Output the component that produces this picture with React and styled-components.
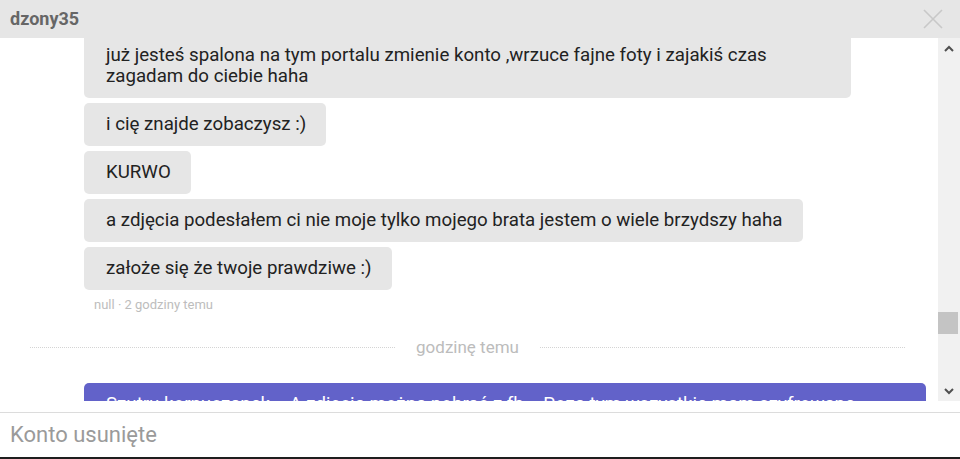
import React from "react";
import styled, { createGlobalStyle } from "styled-components";

const Global = createGlobalStyle`
  html, body { margin: 0; padding: 0; background: #fff; }
  body { font-family: Roboto, "Noto Sans", Arial, sans-serif; }
  * { box-sizing: border-box; }
`;

const Window = styled.div`
  width: 960px;
  height: 459px;
  display: flex;
  flex-direction: column;
  background: #fff;
  border-bottom: 2px solid #1e1e1e;
  overflow: hidden;
`;

const Header = styled.div`
  height: 38px;
  flex: 0 0 38px;
  background: #e6e6e6;
  display: flex;
  align-items: center;
  justify-content: space-between;
  padding: 0 17px 1px 10px;
  position: relative;
  z-index: 1;
`;

const Name = styled.span`
  font-weight: 700;
  font-size: 18px;
  color: #666;
`;

const Close = styled.button`
  border: 0;
  background: none;
  padding: 0;
  width: 20px;
  height: 20px;
  display: flex;
  cursor: pointer;
`;

const Body = styled.div`
  height: 363px;
  flex: 0 0 363px;
  display: flex;
`;

const Scroller = styled.div`
  flex: 1;
  overflow: hidden;
`;

const Messages = styled.div`
  margin-top: -4px;
  padding: 0 12px 0 84px;
  display: flex;
  flex-direction: column;
  align-items: flex-start;
`;

const Bubble = styled.div`
  background: ${(p) => (p.$own ? "#6262c9" : "#e6e6e6")};
  color: ${(p) => (p.$own ? "#fff" : "#222")};
  border-radius: 5px;
  padding: 11px 20px 11px 22px;
  font-size: 18.7px;
  line-height: 21px;
  max-width: ${(p) => (p.$own ? "100%" : "767px")};
  width: ${(p) => (p.$own ? "100%" : "auto")};
  margin-bottom: 5px;
`;

const Meta = styled.div`
  font-size: 13px;
  color: #bdbdbd;
  margin: 3px 0 0 10px;
  line-height: 14px;
`;

const Divider = styled.div`
  display: flex;
  align-items: center;
  gap: 21px;
  margin: 25px 21px 26px -54px;
  font-size: 17px;
  line-height: 20px;
  color: #bcbcbc;
  align-self: stretch;
  &::before, &::after {
    content: "";
    flex: 1;
    border-top: 1px dotted #d4d4d4;
  }
`;

const Scrollbar = styled.div`
  width: 22px;
  flex: 0 0 22px;
  background: #f1f1f1;
  display: flex;
  flex-direction: column;
`;

const Arrow = styled.div`
  height: 20px;
  display: flex;
  align-items: center;
  justify-content: center;
`;

const Track = styled.div`
  flex: 1;
`;

const Thumb = styled.div`
  margin-top: 254px;
  height: 22px;
  width: 20px;
  background: #c4c4c4;
`;

const Composer = styled.div`
  margin-top: 11px;
  flex: 1;
  border-top: 1px solid #dcdcdc;
  display: flex;
  align-items: center;
  padding: 0 10px 2px;
`;

const Input = styled.input`
  border: 0;
  outline: none;
  width: 100%;
  font-family: Roboto, "Noto Sans", Arial, sans-serif;
  font-size: 22px;
  color: #999;
  background: transparent;
  padding: 0;
  &::placeholder { color: #9a9a9a; }
`;

const Chevron = ({ up }) => (
  <svg width="10" height="7" viewBox="0 0 10 7">
    <path
      d={up ? "M1 6 L5 2 L9 6" : "M1 1 L5 5 L9 1"}
      fill="none"
      stroke="#505050"
      strokeWidth="2"
    />
  </svg>
);

const messages = [
  "już jesteś spalona na tym portalu zmienie konto ,wrzuce fajne foty i zajakiś czas zagadam do ciebie haha",
  "i cię znajde zobaczysz :)",
  "KURWO",
  "a zdjęcia podesłałem ci nie moje tylko mojego brata jestem o wiele brzydszy haha",
  "założe się że twoje prawdziwe :)",
];

export default function App() {
  return (
    <>
      <Global />
      <Window>
        <Header>
          <Name>dzony35</Name>
          <Close aria-label="Zamknij">
            <svg width="20" height="20" viewBox="0 0 20 20">
              <path d="M1 1 L19 19 M19 1 L1 19" stroke="#c8c8c8" strokeWidth="1.6" fill="none" />
            </svg>
          </Close>
        </Header>
        <Body>
          <Scroller>
            <Messages>
              {messages.map((m, i) => (
                <Bubble key={i}>{m}</Bubble>
              ))}
              <Meta>null · 2 godziny temu</Meta>
              <Divider>godzinę temu</Divider>
              <Bubble $own>
                Szutru kornuczanek... A zdjęcia można pobrać z fb... Poza tym wszystkie mam szyfrowane
              </Bubble>
            </Messages>
          </Scroller>
          <Scrollbar>
            <Arrow><Chevron up /></Arrow>
            <Track><Thumb /></Track>
            <Arrow><Chevron /></Arrow>
          </Scrollbar>
        </Body>
        <Composer>
          <Input placeholder="Konto usunięte" readOnly />
        </Composer>
      </Window>
    </>
  );
}
